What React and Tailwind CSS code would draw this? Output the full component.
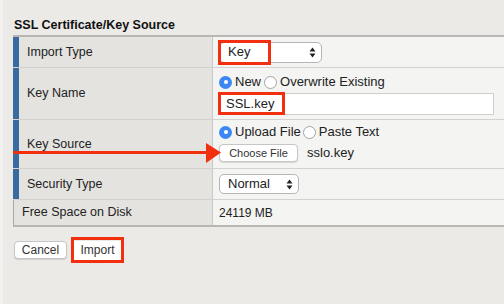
import React from 'react';

const SelectArrows = () => (
  <svg width="7" height="11" viewBox="0 0 7 11" className="shrink-0">
    <path d="M3.5 0.5 L6.5 4.5 L0.5 4.5 Z" fill="#222" />
    <path d="M3.5 10.5 L6.5 6.5 L0.5 6.5 Z" fill="#222" />
  </svg>
);

const Radio = ({ checked }) =>
  checked ? (
    <span className="flex h-[13px] w-[13px] shrink-0 items-center justify-center rounded-full bg-[#3b88f5]">
      <span className="block h-[4px] w-[4px] rounded-full bg-white" />
    </span>
  ) : (
    <span className="block h-[13px] w-[13px] shrink-0 rounded-full border border-[#a3a3a3] bg-white" />
  );

const LabelCell = ({ children, blue = true }) => (
  <div
    className={`flex w-[200px] shrink-0 items-center border-r border-[#c9c8c5] bg-[#e4e3e0] text-[12.5px] ${
      blue ? 'border-l-[6px] border-l-[#386b9f] pl-[8px]' : 'border-l border-l-[#a9a8a5] pl-[8px]'
    }`}
  >
    {children}
  </div>
);

export default function App() {
  return (
    <div className="relative h-[304px] w-[504px] overflow-hidden border-l-[3px] border-[#f3f2f0] bg-[#ebeae7] pl-[10px] pt-[17px] font-['Liberation_Sans',Arial,sans-serif] text-[12px] text-[#222]">
      <h2 className="mb-[2px] pl-[1px] text-[12.5px] font-bold leading-[16px] text-[#111]">SSL Certificate/Key Source</h2>

      <div className="border-t-2 border-b-2 border-[#b8b7b4]">
        {/* Import Type */}
        <div className="flex h-[31px] border-b border-[#d3d2cf]">
          <LabelCell>Import Type</LabelCell>
          <div className="flex flex-1 items-center bg-[#f4f4f2] pl-[6px]">
            <div className="relative">
              <div className="flex h-[21px] w-[103px] items-center justify-between rounded-[5px] border border-[#b5b5b5] bg-white pl-[8px] pr-[5px] text-[13px]">
                <span>Key</span>
                <SelectArrows />
              </div>
              <div className="absolute left-[-1px] top-[-2px] h-[25px] w-[53px] border-[3px] border-[#f2300f]" />
            </div>
          </div>
        </div>

        {/* Key Name */}
        <div className="flex h-[52px] border-b border-[#d3d2cf]">
          <LabelCell>Key Name</LabelCell>
          <div className="flex flex-1 flex-col justify-center gap-[4px] bg-[#f4f4f2] pl-[6px] pt-[3px]">
            <div className="flex items-center leading-[14px]">
              <Radio checked />
              <span className="ml-[3px] text-[13px]">New</span>
              <span className="ml-[3px] flex"><Radio /></span>
              <span className="ml-[3px] text-[13px]">Overwrite Existing</span>
            </div>
            <div className="relative">
              <div className="flex h-[22px] w-[275px] items-center border border-[#cfcfcf] bg-white pl-[6px] text-[13px]">SSL.key</div>
              <div className="absolute left-[-1px] top-[-1px] h-[23px] w-[67px] border-[3px] border-[#f2300f]" />
            </div>
          </div>
        </div>

        {/* Key Source */}
        <div className="flex h-[49px] border-b border-[#d3d2cf]">
          <LabelCell>Key Source</LabelCell>
          <div className="flex flex-1 flex-col justify-center gap-[4px] bg-[#f4f4f2] pl-[6px]">
            <div className="flex items-center leading-[14px]">
              <Radio checked />
              <span className="ml-[3px] text-[13px]">Upload File</span>
              <span className="ml-[2px] flex"><Radio /></span>
              <span className="ml-[3px] text-[13px]">Paste Text</span>
            </div>
            <div className="flex items-center">
              <div className="flex h-[18px] w-[79px] items-center justify-center rounded-[4px] border border-[#c6c6c6] bg-white text-[11px] text-[#333] shadow-[0_1px_1px_rgba(0,0,0,0.12)]">
                Choose File
              </div>
              <span className="ml-[9px] text-[13px]">sslo.key</span>
            </div>
          </div>
        </div>

        {/* Security Type */}
        <div className="flex h-[31px] border-b border-[#d3d2cf]">
          <LabelCell>Security Type</LabelCell>
          <div className="flex flex-1 items-center bg-[#f4f4f2] pl-[6px]">
            <div className="flex h-[20px] w-[80px] items-center justify-between rounded-[5px] border border-[#b5b5b5] bg-white pl-[8px] pr-[5px] text-[13px]">
              <span>Normal</span>
              <SelectArrows />
            </div>
          </div>
        </div>

        {/* Free Space */}
        <div className="flex h-[25px]">
          <LabelCell blue={false}>Free Space on Disk</LabelCell>
          <div className="flex flex-1 items-center bg-[#f4f4f2] pl-[6px]">24119 MB</div>
        </div>
      </div>

      <div className="mt-[10px] flex items-center gap-[4px] pl-[1px]">
        <div className="flex h-[18px] w-[53px] items-center justify-center rounded-[4px] border border-[#c6c6c6] bg-white text-[12px] text-[#333] shadow-[0_1px_1px_rgba(0,0,0,0.12)]">
          Cancel
        </div>
        <div className="flex h-[26px] w-[53px] items-center justify-center border-[3px] border-[#f2300f]">
          <div className="flex h-[19px] w-[47px] items-center justify-center bg-white text-[12px] text-[#333]">Import</div>
        </div>
      </div>

      {/* red annotation arrow */}
      <svg className="absolute left-[10px] top-[142px]" width="210" height="22" viewBox="0 0 210 22">
        <rect x="0" y="9" width="195" height="3" fill="#f2300f" />
        <path d="M193 1 L208 10.5 L193 21 Z" fill="#f2300f" />
      </svg>
    </div>
  );
}
